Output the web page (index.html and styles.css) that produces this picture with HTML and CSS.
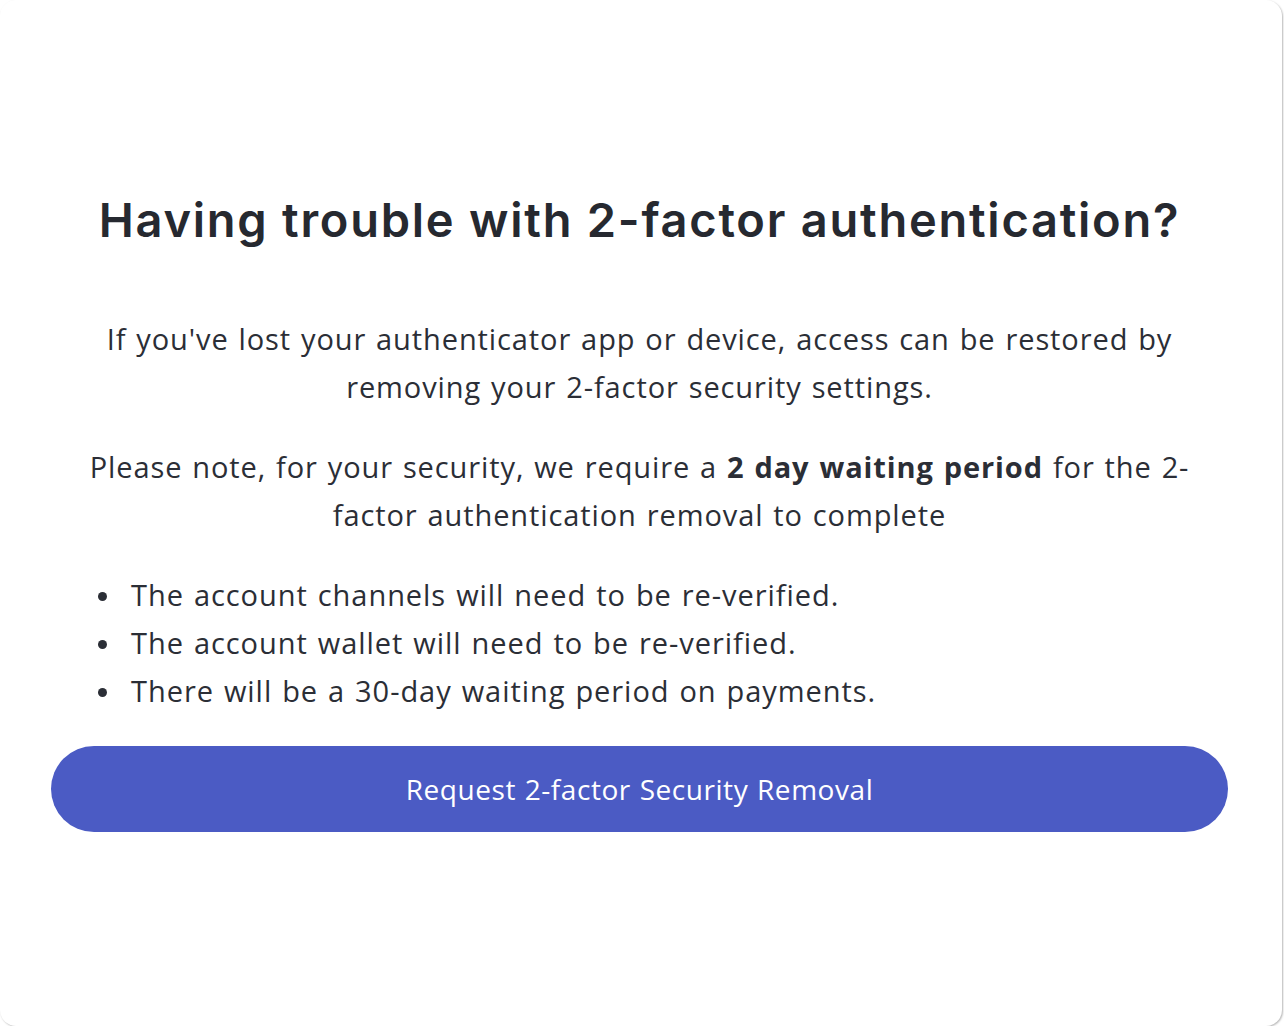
FILE: index.html
```html
<!DOCTYPE html>
<html lang="en">
<head>
<meta charset="utf-8">
<title>2-factor authentication</title>
<link rel="stylesheet" href="styles.css">
</head>
<body>
<div class="card">
  <div class="content">
    <h1 class="title">Having trouble with 2-factor authentication?</h1>
    <p class="text">If you've lost your authenticator app or device, access can be restored by<br>removing your 2-factor security settings.</p>
    <p class="text">Please note, for your security, we require a <strong>2 day waiting period</strong> for the 2-<br>factor authentication removal to complete</p>
    <ul class="list">
      <li class="item">The account channels will need to be re-verified.</li>
      <li class="item">The account wallet will need to be re-verified.</li>
      <li class="item">There will be a 30-day waiting period on payments.</li>
    </ul>
    <button class="btn" type="button">Request 2-factor Security Removal</button>
  </div>
</div>
</body>
</html>
```
FILE: styles.css
```css
html, body {
  margin: 0;
  padding: 0;
  background: #ffffff;
}
.card {
  width: 1282px;
  height: 1026px;
  box-sizing: border-box;
  background: #ffffff;
  border-radius: 16px;
  box-shadow: 1px 1px 2px rgba(0, 0, 0, 0.28);
  display: flex;
  flex-direction: column;
  justify-content: center;
  padding: 0 54px 4px 51px;
}
.content {
  display: flex;
  flex-direction: column;
  color: #2b2e36;
  font-family: "Open Sans", "Noto Sans", sans-serif;
}
.title {
  margin: 0 0 65px;
  font-family: Inter, "Noto Sans", sans-serif;
  font-weight: 600;
  font-size: 47px;
  line-height: 60px;
  letter-spacing: 1.75px;
  text-align: center;
  color: #262930;
}
.text {
  margin: 0 0 32px;
  font-size: 29px;
  line-height: 48px;
  letter-spacing: 0.9px;
  word-spacing: 1.5px;
  text-align: center;
}
.text strong {
  font-weight: 700;
}
.list {
  margin: 0 0 31px;
  padding: 0;
  list-style: none;
  font-size: 29px;
  line-height: 48px;
  letter-spacing: 0.95px;
  word-spacing: 1.5px;
}
.item {
  display: flex;
  align-items: center;
}
.item::before {
  content: "";
  flex: none;
  width: 9px;
  height: 9px;
  margin: 2px 24px 0 47px;
  border-radius: 50%;
  background: currentColor;
}
.btn {
  height: 86px;
  border: none;
  border-radius: 43px;
  background: #4b5bc4;
  color: #ffffff;
  font-family: "Open Sans", "Noto Sans", sans-serif;
  font-size: 28px;
  letter-spacing: 0.55px;
  word-spacing: 1px;
  cursor: pointer;
}
```
